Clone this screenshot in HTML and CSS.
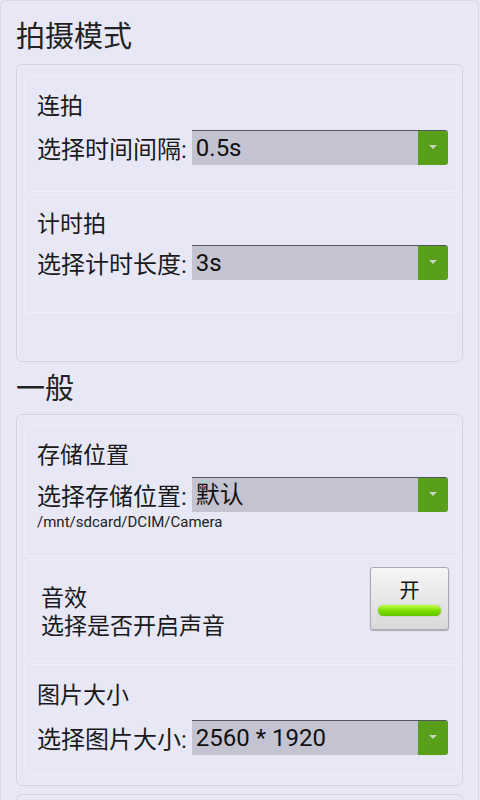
FILE: index.html
```html
<!DOCTYPE html>
<html lang="zh-CN">
<head>
    <meta charset="UTF-8">
    <meta name="viewport" content="width=device-width, initial-scale=1.0">
    <title>设置</title>
    <link rel="stylesheet" href="styles.css">
</head>
<body>
<div class="screen">
    <h2 class="group-title">拍摄模式</h2>
    <div class="card card-mode">
        <div class="row row-burst">
            <div class="row-title">连拍</div>
            <div class="picker">
                <span class="picker-label">选择时间间隔:</span>
                <div class="spinner"><span class="spinner-value">0.5s</span><span class="spinner-arrow"></span></div>
            </div>
        </div>
        <div class="row row-timer">
            <div class="row-title">计时拍</div>
            <div class="picker">
                <span class="picker-label">选择计时长度:</span>
                <div class="spinner"><span class="spinner-value">3s</span><span class="spinner-arrow"></span></div>
            </div>
        </div>
    </div>

    <h2 class="group-title group-general">一般</h2>
    <div class="card">
        <div class="row row-storage">
            <div class="row-title">存储位置</div>
            <div class="picker">
                <span class="picker-label">选择存储位置:</span>
                <div class="spinner"><span class="spinner-value">默认</span><span class="spinner-arrow"></span></div>
            </div>
            <div class="path">/mnt/sdcard/DCIM/Camera</div>
        </div>
        <div class="row row-sound">
            <div class="sound-text">
                <div>音效</div>
                <div>选择是否开启声音</div>
            </div>
            <button class="toggle" onclick="this.classList.toggle('off')">
                <span class="toggle-text">开</span>
                <span class="toggle-bar"></span>
            </button>
        </div>
        <div class="row row-size">
            <div class="row-title">图片大小</div>
            <div class="picker">
                <span class="picker-label">选择图片大小:</span>
                <div class="spinner"><span class="spinner-value">2560 * 1920</span><span class="spinner-arrow"></span></div>
            </div>
        </div>
    </div>
    <div class="card card-next"></div>
</div>
</body>
</html>
```

FILE: styles.css
```css
html, body {
    margin: 0;
    background-color: #e7e7f6;
    color: #1a1a1a;
    font-family: Roboto, "Noto Sans CJK SC", sans-serif;
}

.screen {
    height: 800px;
    overflow: hidden;
    box-sizing: border-box;
    border: 1px solid #d7d7e8;
    border-bottom: none;
    border-radius: 6px 6px 0 0;
    margin-right: 1px;
}

.group-title {
    margin: 0;
    height: 63px;
    padding-left: 15px;
    font-size: 29px;
    font-weight: normal;
    line-height: 72px;
    color: #222;
}

.group-general {
    height: 52px;
    line-height: 54px;
}

.card {
    margin: 0 15px;
    padding: 10px 5px 10px 7px;
    border: 1px solid #d2d2e4;
    border-radius: 6px;
    box-shadow: inset 0 0 0 1px #ececf9;
}

.card-mode {
    height: 276px;
}

.card-next {
    margin-top: 8px;
    height: 40px;
}

.row {
    border: 1px solid #eeeefb;
    border-radius: 3px;
    padding: 14px 8px 0 12px;
    box-sizing: border-box;
}

.row + .row {
    margin-top: 2px;
}

.row-burst { height: 117px; padding-top: 16px; }
.row-timer { height: 119px; padding-top: 15px; }
.row-storage { height: 132px; padding-top: 15px; }
.row-sound { height: 103px; }
.row-size { height: 111px; padding-top: 16px; }

.row-title {
    font-size: 23px;
    line-height: 30px;
    margin-bottom: 6px;
}

.row-burst .row-title {
    margin-bottom: 8px;
}

.row-timer .row-title {
    margin-bottom: 5px;
}

.row-size .row-title {
    margin-bottom: 9px;
}

.picker {
    display: flex;
    align-items: center;
}

.picker-label {
    flex: none;
    font-size: 24px;
    margin-right: 5px;
    white-space: nowrap;
}

.spinner {
    flex: 1;
    display: flex;
    height: 35px;
    box-sizing: border-box;
    border-top: 1px solid #55555f;
    border-radius: 0 3px 3px 0;
    background-color: #c4c3d2;
    overflow: hidden;
}

.spinner-value {
    flex: 1;
    padding-left: 4px;
    font-size: 24px;
    line-height: 34px;
    color: #111;
    white-space: nowrap;
}

.spinner-arrow {
    flex: none;
    width: 30px;
    background-color: #58a01a;
    position: relative;
}

.spinner-arrow::after {
    content: "";
    position: absolute;
    left: 11px;
    top: 14px;
    border-left: 4px solid transparent;
    border-right: 4px solid transparent;
    border-top: 4px solid #c8d8b8;
}

.path {
    margin-top: 1px;
    font-size: 15px;
    color: #222;
}

.row-sound {
    display: flex;
    justify-content: space-between;
    align-items: flex-start;
    padding: 7px 7px 0 16px;
}

.sound-text {
    padding-top: 18px;
    font-size: 23px;
    line-height: 28px;
}

.toggle {
    width: 79px;
    height: 63px;
    margin: 0;
    padding: 10px 0 0;
    border: 1px solid #a9a9b0;
    border-radius: 3px;
    background: linear-gradient(#f6f6f6, #d9d9da);
    box-shadow: 0 1px 1px rgba(0, 0, 0, 0.25);
    cursor: pointer;
    display: flex;
    flex-direction: column;
    align-items: center;
    font-family: "Noto Sans CJK SC", sans-serif;
}

.toggle-text {
    font-size: 20px;
    line-height: 24px;
    color: #111;
}

.toggle-bar {
    margin-top: 3px;
    width: 63px;
    height: 11px;
    border-radius: 6px;
    background: linear-gradient(#c4ff50, #7ee000 50%, #64c400);
    box-shadow: 0 0 1px #4a9a00;
}

.toggle.off .toggle-bar {
    background: #9a9a9a;
    box-shadow: none;
}
```
